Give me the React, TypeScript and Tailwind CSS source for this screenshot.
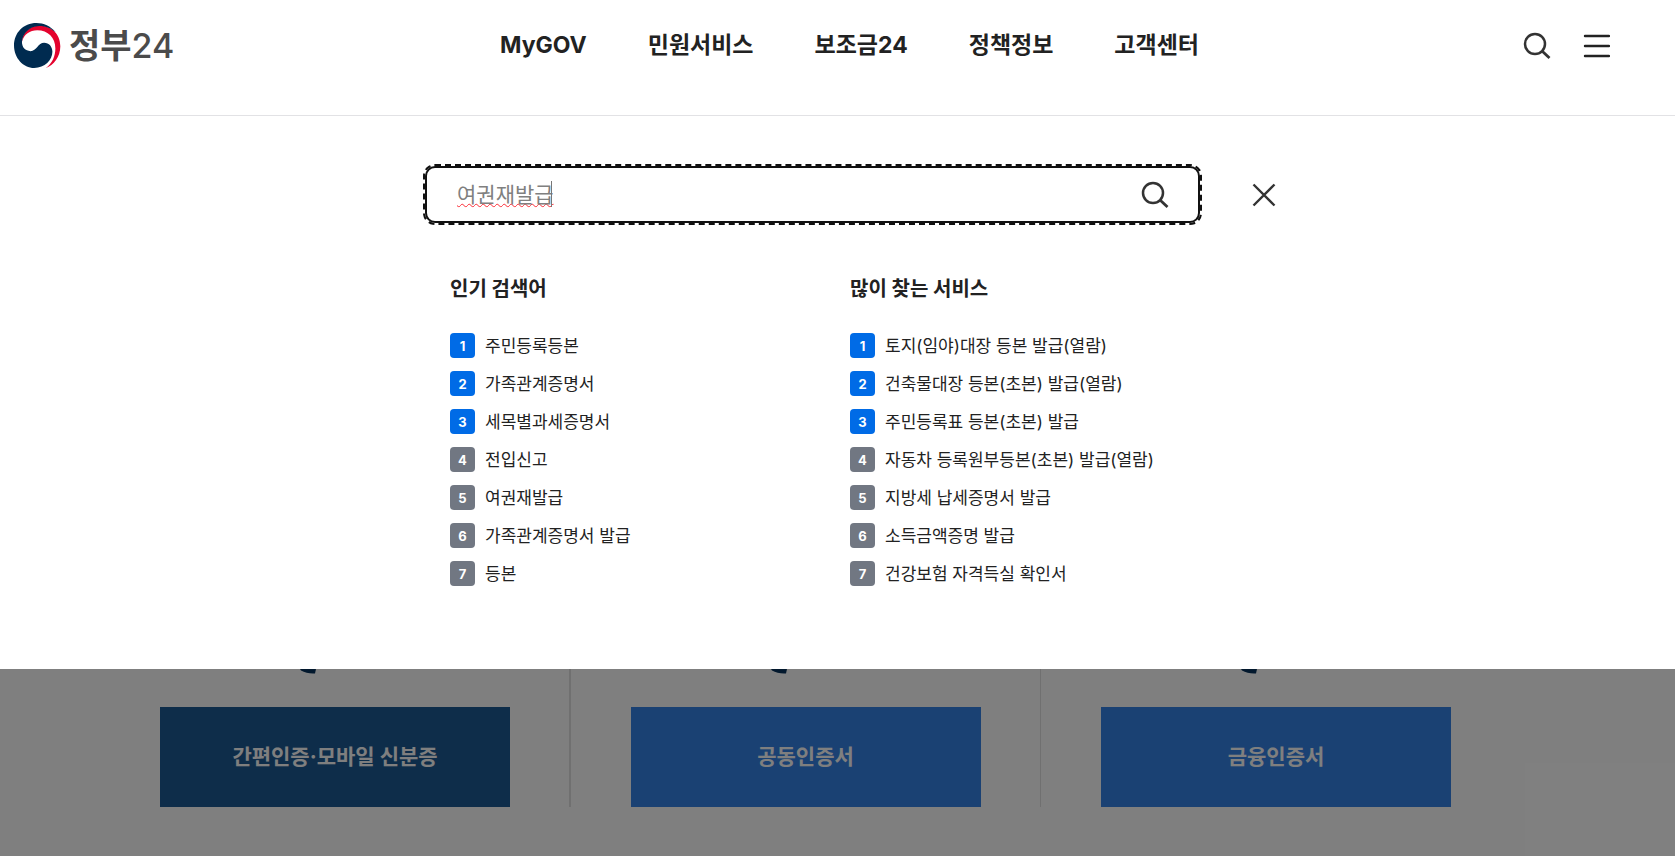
import { useState } from "react";

const menus = ["MyGOV", "민원서비스", "보조금24", "정책정보", "고객센터"];

const keywords = [
  "주민등록등본",
  "가족관계증명서",
  "세목별과세증명서",
  "전입신고",
  "여권재발급",
  "가족관계증명서 발급",
  "등본",
];

const services = [
  "토지(임야)대장 등본 발급(열람)",
  "건축물대장 등본(초본) 발급(열람)",
  "주민등록표 등본(초본) 발급",
  "자동차 등록원부등본(초본) 발급(열람)",
  "지방세 납세증명서 발급",
  "소득금액증명 발급",
  "건강보험 자격득실 확인서",
];

const logins = [
  { name: "간편인증·모바일 신분증", color: "bg-[#1c5a94]", line: "border-r-2" },
  { name: "공동인증서", color: "bg-[#3482e6]", line: "border-r" },
  { name: "금융인증서", color: "bg-[#3482e6]", line: "" },
];

function SearchIcon() {
  return (
    <svg className="size-7" viewBox="0 0 28 28" fill="none" stroke="#333" strokeWidth="2.5">
      <circle cx="12" cy="12" r="10" />
      <path d="M19 19l7.5 7" strokeWidth="2.8" />
    </svg>
  );
}

function Logo() {
  return (
    <a href="#" className="-ml-2.5 flex items-center gap-2">
      <svg className="h-[45px] w-[47px]" viewBox="42 68 142 136">
        <path
          fill="#e4032e"
          d="M66 125C66 98 88 76 118 76C155 76 182 100 182 138C182 170 162 195 138 204C158 190 167 168 167 145C167 112 145 90 112 90C90 90 72 102 66 125Z"
        />
        <path
          fill="#002b50"
          d="M168 96C152 77 132 68 110 68C70 68 42 98 42 136C42 174 70 204 103 204C135 204 158 180 158 155C158 140 148 128 133 128C115 128 110 153 92 153C76 153 66 142 66 125C68 98 90 78 118 77C138 77 154 84 168 96Z"
        />
      </svg>
      <span className="text-[34px] font-bold leading-[44px] text-[#4b4b4b]">
        정부<span className="font-medium">24</span>
      </span>
    </a>
  );
}

function RankList({ title, items }: { title: string; items: string[] }) {
  return (
    <section className="w-[400px]">
      <h2 className="text-xl font-bold leading-8 text-[#222]">{title}</h2>
      <ol className="mt-7 flex flex-col gap-[13px]">
        {items.map((item, i) => (
          <li key={item}>
            <a href="#" className="flex h-[25px] items-center gap-2.5 text-[17px] leading-6 text-[#222]">
              <span
                className={`flex size-[25px] items-center justify-center rounded text-[13px] font-bold text-white ${
                  i < 3 ? "bg-[#006be6]" : "bg-[#717782]"
                }`}
              >
                {i + 1}
              </span>
              <span>{item}</span>
            </a>
          </li>
        ))}
      </ol>
    </section>
  );
}

export default function App() {
  const [query, setQuery] = useState("여권재발급");

  return (
    <div className="flex min-h-screen flex-col bg-white font-['Inter','Noto_Sans_CJK_KR',sans-serif]">
      <header className="grid h-[116px] grid-cols-[1fr_auto_1fr] items-start border-b border-[#e2e2e5] pl-6 pt-[23px]">
        <Logo />
        <nav className="flex gap-[61px]">
          {menus.map((menu) => (
            <a key={menu} href="#" className="text-[23px] font-bold leading-[44px] text-[#222]">
              {menu}
            </a>
          ))}
        </nav>
        <div className="flex h-[46px] items-center justify-end gap-8 pr-[65px]">
          <button type="button" aria-label="검색">
            <SearchIcon />
          </button>
          <button type="button" aria-label="전체메뉴">
            <svg className="h-7 w-[27px]" viewBox="0 0 27 28" stroke="#222" strokeWidth="2.4" strokeLinecap="round">
              <path d="M2 4h24M2 14h24M2 24h24" />
            </svg>
          </button>
        </div>
      </header>

      <main className="pb-[83px] pl-[26px] pt-[50px]">
        <div className="mx-auto w-[851px]">
          <form className="flex items-center justify-between" onSubmit={(e) => e.preventDefault()}>
            <div className="relative flex h-[57px] w-[775px] items-center rounded-[10px] border-2 border-[#111] pl-[30px] pr-[29px] outline-2 outline-dashed outline-[#111]">
              <input
                type="text"
                aria-label="검색어"
                value={query}
                onChange={(e) => setQuery(e.target.value)}
                className="h-9 min-w-0 flex-1 pb-1 text-[21px] text-[#808080] underline decoration-red-500 decoration-wavy decoration-1 outline-none"
              />
              <span className="absolute left-[124px] top-[13px] h-[26px] w-px bg-[#777]" />
              <button type="submit" aria-label="검색">
                <SearchIcon />
              </button>
            </div>
            <button type="button" aria-label="닫기">
              <svg className="size-6" viewBox="0 0 24 24" stroke="#333" strokeWidth="2.4">
                <path d="M1.5 1.5l21 21M22.5 1.5l-21 21" />
              </svg>
            </button>
          </form>
          <div className="mt-[50px] flex pl-[25px]">
            <RankList title="인기 검색어" items={keywords} />
            <RankList title="많이 찾는 서비스" items={services} />
          </div>
        </div>
      </main>

      <section className="relative flex-1 overflow-hidden pl-[101px] pr-[164px]">
        <div className="grid grid-cols-3">
          {logins.map((login) => (
            <div key={login.name} className={`flex h-[138px] flex-col items-center justify-between border-[#e0e0e0] ${login.line}`}>
              <svg className="mr-[54px] h-[5px] w-4" viewBox="0 0 16 5">
                <path d="M0 0h16l-1 4.5q-8 .5-14-3z" fill="#04305a" />
              </svg>
              <button type="button" className={`h-[100px] w-[350px] text-[21px] font-bold text-white ${login.color}`}>
                {login.name}
              </button>
            </div>
          ))}
        </div>
        <div className="absolute inset-0 bg-black/50" />
      </section>
    </div>
  );
}
